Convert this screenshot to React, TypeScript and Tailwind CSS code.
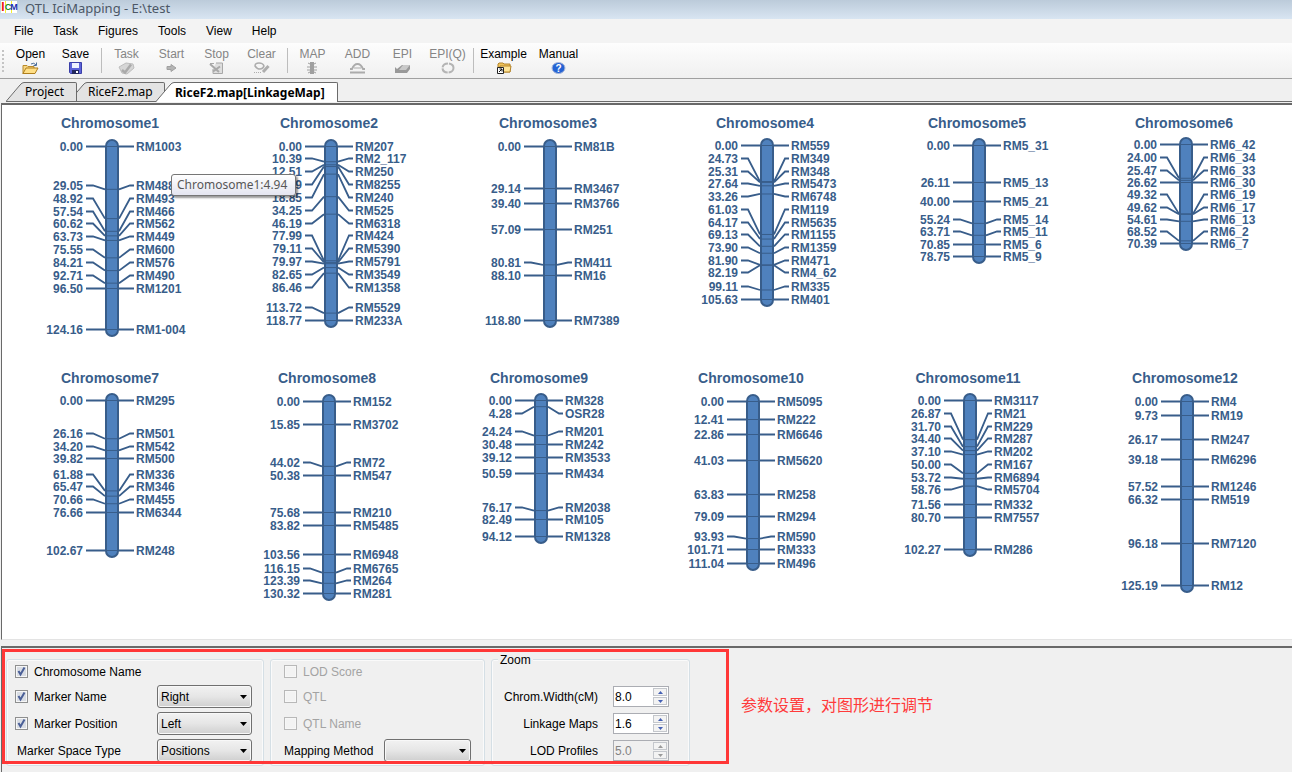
import { useState } from "react";
import type { ReactNode } from "react";
import clsx from "clsx";

// [position in cM, marker name, y of the label in the drawing]
type Marker = [string, string, number];

type Chromosome = {
  name: string;
  width: number;
  markers: Marker[];
};

const topRow: Chromosome[] = [
  {
    name: "Chromosome1",
    width: 219,
    markers: [
      ["0.00", "RM1003", 41],
      ["29.05", "RM488", 80],
      ["48.92", "RM493", 93],
      ["57.54", "RM466", 106],
      ["60.62", "RM562", 118],
      ["63.73", "RM449", 131],
      ["75.55", "RM600", 144],
      ["84.21", "RM576", 157],
      ["92.71", "RM490", 170],
      ["96.50", "RM1201", 183],
      ["124.16", "RM1-004", 224],
    ],
  },
  {
    name: "Chromosome2",
    width: 219,
    markers: [
      ["0.00", "RM207", 41],
      ["10.39", "RM2_117", 53],
      ["12.51", "RM250", 66],
      ["13.69", "RM8255", 79],
      ["18.85", "RM240", 92],
      ["34.25", "RM525", 105],
      ["46.19", "RM6318", 118],
      ["77.99", "RM424", 130],
      ["79.11", "RM5390", 143],
      ["79.97", "RM5791", 156],
      ["82.65", "RM3549", 169],
      ["86.46", "RM1358", 182],
      ["113.72", "RM5529", 202],
      ["118.77", "RM233A", 215],
    ],
  },
  {
    name: "Chromosome3",
    width: 217,
    markers: [
      ["0.00", "RM81B", 41],
      ["29.14", "RM3467", 83],
      ["39.40", "RM3766", 98],
      ["57.09", "RM251", 124],
      ["80.81", "RM411", 157],
      ["88.10", "RM16", 170],
      ["118.80", "RM7389", 215],
    ],
  },
  {
    name: "Chromosome4",
    width: 212,
    markers: [
      ["0.00", "RM559", 40],
      ["24.73", "RM349", 53],
      ["25.31", "RM348", 66],
      ["27.64", "RM5473", 78],
      ["33.26", "RM6748", 91],
      ["61.03", "RM119", 104],
      ["64.17", "RM5635", 117],
      ["69.13", "RM1155", 129],
      ["73.90", "RM1359", 142],
      ["81.90", "RM471", 155],
      ["82.19", "RM4_62", 167],
      ["99.11", "RM335", 181],
      ["105.63", "RM401", 194],
    ],
  },
  {
    name: "Chromosome5",
    width: 207,
    markers: [
      ["0.00", "RM5_31", 40],
      ["26.11", "RM5_13", 77],
      ["40.00", "RM5_21", 96],
      ["55.24", "RM5_14", 114],
      ["63.71", "RM5_11", 126],
      ["70.85", "RM5_6", 139],
      ["78.75", "RM5_9", 151],
    ],
  },
  {
    name: "Chromosome6",
    width: 200,
    markers: [
      ["0.00", "RM6_42", 39],
      ["24.00", "RM6_34", 52],
      ["25.47", "RM6_33", 65],
      ["26.62", "RM6_30", 77],
      ["49.32", "RM6_19", 89],
      ["49.62", "RM6_17", 102],
      ["54.61", "RM6_13", 114],
      ["68.52", "RM6_2", 126],
      ["70.39", "RM6_7", 138],
    ],
  },
];

const bottomRow: Chromosome[] = [
  {
    name: "Chromosome7",
    width: 217,
    markers: [
      ["0.00", "RM295", 40],
      ["26.16", "RM501", 73],
      ["34.20", "RM542", 86],
      ["39.82", "RM500", 98],
      ["61.88", "RM336", 114],
      ["65.47", "RM346", 126],
      ["70.66", "RM455", 139],
      ["76.66", "RM6344", 152],
      ["102.67", "RM248", 190],
    ],
  },
  {
    name: "Chromosome8",
    width: 212,
    markers: [
      ["0.00", "RM152", 41],
      ["15.85", "RM3702", 64],
      ["44.02", "RM72", 102],
      ["50.38", "RM547", 115],
      ["75.68", "RM210", 152],
      ["83.82", "RM5485", 165],
      ["103.56", "RM6948", 194],
      ["116.15", "RM6765", 208],
      ["123.39", "RM264", 220],
      ["130.32", "RM281", 233],
    ],
  },
  {
    name: "Chromosome9",
    width: 212,
    markers: [
      ["0.00", "RM328", 40],
      ["4.28", "OSR28", 53],
      ["24.24", "RM201", 71],
      ["30.48", "RM242", 84],
      ["39.12", "RM3533", 97],
      ["50.59", "RM434", 113],
      ["76.17", "RM2038", 147],
      ["82.49", "RM105", 159],
      ["94.12", "RM1328", 176],
    ],
  },
  {
    name: "Chromosome10",
    width: 217,
    markers: [
      ["0.00", "RM5095", 41],
      ["12.41", "RM222", 59],
      ["22.86", "RM6646", 74],
      ["41.03", "RM5620", 100],
      ["63.83", "RM258", 134],
      ["79.09", "RM294", 156],
      ["93.93", "RM590", 176],
      ["101.71", "RM333", 189],
      ["111.04", "RM496", 203],
    ],
  },
  {
    name: "Chromosome11",
    width: 217,
    markers: [
      ["0.00", "RM3117", 40],
      ["26.87", "RM21", 53],
      ["31.70", "RM229", 66],
      ["34.40", "RM287", 78],
      ["37.10", "RM202", 91],
      ["50.00", "RM167", 104],
      ["53.72", "RM6894", 117],
      ["58.76", "RM5704", 129],
      ["71.56", "RM332", 144],
      ["80.70", "RM7557", 157],
      ["102.27", "RM286", 189],
    ],
  },
  {
    name: "Chromosome12",
    width: 200,
    markers: [
      ["0.00", "RM4", 41],
      ["9.73", "RM19", 55],
      ["26.17", "RM247", 79],
      ["39.18", "RM6296", 99],
      ["57.52", "RM1246", 126],
      ["66.32", "RM519", 139],
      ["96.18", "RM7120", 183],
      ["125.19", "RM12", 225],
    ],
  },
];

// x of the chromosome's centre line inside its own drawing
const CENTER = 74;

const LinkageGroup = ({ name, width, markers }: Chromosome) => {
  const first = markers[0];
  const last = markers[markers.length - 1];
  const top = first[2];
  const scale = (last[2] - top) / Number(last[0]);

  return (
    <svg
      width={width}
      height={255}
      className="shrink-0 overflow-visible font-bold"
      fill="#385d8a"
      role="img"
      aria-label={name}
    >
      <text x={CENTER - 2} y={23} fontSize={14} textAnchor="middle">
        {name}
      </text>
      <rect
        x={CENTER - 6}
        y={top - 6}
        width={12}
        height={last[2] - top + 13}
        rx={6}
        fill="#4f81bd"
        stroke="#385d8a"
        strokeWidth={2}
      />
      {markers.map(([position, marker, y]) => {
        const labelY = y + 0.5;
        const exactY = top + Number(position) * scale + 0.5;
        // labels that sit level with their mark get a straight line
        const markY = Math.abs(exactY - labelY) < 1 ? labelY : exactY;
        return (
          <g key={marker}>
            <path
              d={`M${CENTER - 6} ${markY}h12`}
              stroke="#385d8a"
              strokeWidth={1}
            />
            <path
              d={`M${CENTER - 26} ${labelY}h7L${CENTER - 7} ${markY}M${CENTER + 7} ${markY}L${CENTER + 18} ${labelY}h4`}
              fill="none"
              stroke="#385d8a"
              strokeWidth={1.8}
            />
            <text x={CENTER - 29} y={y + 5} fontSize={12} textAnchor="end">
              {position}
            </text>
            <text x={CENTER + 24} y={y + 5} fontSize={12}>
              {marker}
            </text>
          </g>
        );
      })}
    </svg>
  );
};

const iconProps = { width: 17, height: 14, viewBox: "0 0 17 14" };

const OpenIcon = () => (
  <svg {...iconProps}>
    <path d="M1 12V3.500h4l1 1h6v2" fill="#f7d683" stroke="#b98a2a" />
    <path d="M1 11.500L4 6h12l-3 5.500z" fill="#ffdf86" stroke="#b07f1d" />
    <path d="M9 2q3-2 5 1M14.500 .5v3h-3" fill="none" stroke="#4b6d99" />
  </svg>
);

const SaveIcon = () => (
  <svg {...iconProps}>
    <path d="M2.500 .5h12v11h-11l-1-1z" fill="#5c63d8" stroke="#3a3fa8" />
    <path d="M5 1h7v5H5z" fill="#eef2ff" />
    <path d="M5 8h7v4H5z" fill="#23285e" />
    <path d="M9 9h2v2H9z" fill="#fff" />
  </svg>
);

const TaskIcon = () => (
  <svg {...iconProps} fill="none" stroke="#bdbdbd">
    <path d="M1 5l7-4 7 1 1 4-7 6-5-1z" fill="#d6d6d6" />
    <path d="M4 8l3 2.500 6-8" stroke="#aaa" strokeWidth={2.500} />
  </svg>
);

const StartIcon = () => (
  <svg {...iconProps}>
    <path d="M4 4.500h4v-2L13 6 8 9.500v-2H4z" fill="#b4b4b4" stroke="#a0a0a0" />
  </svg>
);

const StopIcon = () => (
  <svg {...iconProps} fill="none" stroke="#a8a8a8">
    <path d="M2 1.500h4M8 1h6.500v10.500H5V7" fill="#dedede" />
    <path d="M2 2l9 8M5 9.500l7-5" strokeWidth={2} />
  </svg>
);

const ClearIcon = () => (
  <svg {...iconProps} fill="none" stroke="#adadad">
    <path d="M2 4q0-3 4-3t5 3q-1 3-4 3T2 4z" strokeWidth={1.500} />
    <path d="M15.500 4L10 10" strokeWidth={3} />
    <path d="M1 10.500h8" strokeDasharray="1 1" />
  </svg>
);

const MapIcon = () => (
  <svg {...iconProps} stroke="#a0a0a0">
    <path d="M4 1l4 2 4-2M3 5h10M3 8h10M4 11l4-2 4 2" fill="none" />
    <path d="M8 0v12" strokeWidth={4} />
  </svg>
);

const AddIcon = () => (
  <svg {...iconProps} fill="none" stroke="#ababab">
    <path d="M1 7h2q2-5 5.500-5T14 7h2" strokeWidth={2} />
    <path d="M5 6h7" />
    <path d="M1 10.500h15" strokeWidth={2} />
  </svg>
);

const EpiIcon = () => (
  <svg {...iconProps}>
    <path d="M1 11V5l2 2 5-4h8v4l-3 4z" fill="#999" />
    <path d="M5 8l4-5h7l-4 5z" fill="#c9c9c9" />
  </svg>
);

const EpiQIcon = () => (
  <svg {...iconProps}>
    <ellipse
      cx={9}
      cy={6}
      rx={5.500}
      ry={4.500}
      fill="none"
      stroke="#b4b4b4"
      strokeWidth={2}
      strokeDasharray="7 1"
    />
  </svg>
);

const ExampleIcon = () => (
  <svg {...iconProps}>
    <path d="M3 9V2l1-1h4l1 1h6v8H3z" fill="#f0c45a" stroke="#b3832a" />
    <path d="M5 4h11l-1 6H5z" fill="#ffe596" stroke="#b3832a" />
    <path d="M2.500 5.500h6v6h-6z" fill="#fff" stroke="#222" />
    <path d="M4 10l3-3M4.500 7H7v2.500" fill="none" stroke="#111" />
  </svg>
);

const ManualIcon = () => (
  <svg {...iconProps}>
    <ellipse
      cx={8.500}
      cy={6}
      rx={6.500}
      ry={5.500}
      fill="#2563d4"
      stroke="#a9b8d8"
    />
    <text
      x={8.500}
      y={10}
      fontSize={10}
      fontWeight="bold"
      fill="#fff"
      textAnchor="middle"
    >
      ?
    </text>
  </svg>
);

type ToolButtonProps = {
  label: string;
  icon: ReactNode;
  disabled?: boolean;
  wide?: boolean;
};

const ToolButton = ({ label, icon, disabled, wide }: ToolButtonProps) => (
  <button
    type="button"
    disabled={disabled}
    className={clsx(
      "flex shrink-0 flex-col items-center leading-4 text-black disabled:text-[#858585]",
      wide ? "w-[55px]" : "w-[45px]",
    )}
  >
    {label}
    {icon}
  </button>
);

const Separator = () => (
  <span className="mr-0.5 ml-[3px] h-[25px] w-px shrink-0 bg-[#bdbdbd]" />
);

type TabProps = {
  label: string;
  className: string;
  active?: boolean;
};

const Tab = ({ label, className, active }: TabProps) => (
  <button
    type="button"
    role="tab"
    aria-selected={!!active}
    className={clsx(
      "flex h-5 shrink-0 font-[Noto_Sans,sans-serif] text-[12px] whitespace-nowrap",
      className,
    )}
  >
    <svg width={18} height={20} className="shrink-0">
      <path
        d="M0 20L14 3Q16 .5 18 .5V20z"
        fill={active ? "#ffffff" : "#e3e3e3"}
      />
      <path
        d={
          active
            ? "M0 19.500L14 3Q16 .5 18 .5"
            : "M18 19.500H0L14 3Q16 .5 18 .5"
        }
        fill="none"
        stroke="#6b6b6b"
      />
    </svg>
    <span
      className={clsx(
        "flex h-full flex-1 items-center rounded-tr-xs border-t border-r border-[#6b6b6b] pl-px",
        active ? "bg-white font-bold" : "border-b bg-[#e3e3e3]",
      )}
    >
      {label}
    </span>
  </button>
);

type CheckboxProps = {
  label: string;
  checked?: boolean;
  disabled?: boolean;
};

const Checkbox = ({ label, checked, disabled }: CheckboxProps) => (
  <label
    className={clsx(
      "flex items-center gap-1.5",
      disabled && "text-[#a3a3a3]",
    )}
  >
    <span className="relative flex">
      <input
        type="checkbox"
        defaultChecked={checked}
        disabled={disabled}
        className="peer size-[13px] appearance-none border border-[#8e8f8f] bg-[#d9dde4] shadow-[inset_0_0_0_1px_#f7f7f7] disabled:border-[#b8b8b8] disabled:bg-[#f3f3f3]"
      />
      <svg
        viewBox="0 0 13 13"
        className="pointer-events-none absolute inset-0 hidden size-[13px] peer-checked:block"
      >
        <path
          d="M3.500 6L5.500 9.500L9.500 2.500"
          fill="none"
          stroke="#4a5f97"
          strokeWidth={2}
        />
      </svg>
    </span>
    {label}
  </label>
);

type SelectProps = {
  id: string;
  label: string;
  options: string[];
  className: string;
};

const Select = ({ id, label, options, className }: SelectProps) => (
  <span className={clsx("relative flex", className)}>
    <select
      id={id}
      aria-label={label}
      className="h-[23px] w-full appearance-none rounded-[3px] border border-[#707070] bg-linear-to-b from-[#f2f2f2] via-[#e6e6e6] to-[#cfcfcf] pl-[3px] shadow-[inset_0_0_0_1px_#f8f8f8]"
    >
      {options.map((option) => (
        <option key={option}>{option}</option>
      ))}
    </select>
    <svg
      width={7}
      height={4}
      className="pointer-events-none absolute top-2.5 right-[5px]"
    >
      <path d="M0 0h7L3.500 4z" />
    </svg>
  </span>
);

type SpinnerProps = {
  id: string;
  label: string;
  initial: number;
  disabled?: boolean;
};

const Spinner = ({ id, label, initial, disabled }: SpinnerProps) => {
  const [value, setValue] = useState(initial);
  const arrow = disabled ? "#9a9a9a" : "#4460b4";

  return (
    <div className="flex h-[27px] items-center justify-end">
      <label htmlFor={id} className="pr-[15px]">
        {label}
      </label>
      <div
        className={clsx(
          "flex h-[21px] w-14 border border-[#abadb3]",
          disabled ? "bg-[#f0f0f0] text-[#838383]" : "bg-white",
        )}
      >
        <input
          id={id}
          value={value.toFixed(1)}
          disabled={disabled}
          readOnly
          className="w-[39px] pl-px"
        />
        <span className="flex flex-col gap-px py-px">
          <button
            type="button"
            aria-label={`Increase ${label}`}
            disabled={disabled}
            onClick={() => setValue(value + 0.1)}
            className="flex h-2 w-[14px] items-center justify-center border border-[#c4c7cc] bg-[#f3f3f3]"
          >
            <svg width={5} height={3}>
              <path d="M0 3h5L2.500 0z" fill={arrow} />
            </svg>
          </button>
          <button
            type="button"
            aria-label={`Decrease ${label}`}
            disabled={disabled}
            onClick={() => setValue(value - 0.1)}
            className="flex h-2 w-[14px] items-center justify-center border border-[#c4c7cc] bg-[#f3f3f3]"
          >
            <svg width={5} height={3}>
              <path d="M0 0h5L2.500 3z" fill={arrow} />
            </svg>
          </button>
        </span>
      </div>
    </div>
  );
};

const App = () => {
  const menus = ["File", "Task", "Figures", "Tools", "View", "Help"];
  const groupBox =
    "h-[107px] shrink-0 rounded-[3px] border border-[#d5dfe5] shadow-[inset_0_0_0_1px_#fafafa]";

  return (
    <div className="flex min-h-screen flex-col overflow-hidden bg-[#f0f0f0] font-[Liberation_Sans,Arial,sans-serif] text-[12px] text-black">
      <header className="flex h-[19px] items-start gap-[7px] bg-linear-to-b from-[#bccbda] to-[#d8e5f2] font-[Noto_Sans,sans-serif] text-[13px] text-[#4c5766]">
        <svg width={17} height={12} className="mt-px ml-px" aria-hidden="true">
          <path d="M0 0h16v12H0z" fill="#fff" />
          <path d="M4 0h1v12H4zM10 0h1v12h-1z" fill="#f4ee33" />
          <g
            fontFamily="Liberation Sans"
            fontWeight="bold"
            fontSize={10}
            textAnchor="middle"
          >
            <text x={2} y={10} fontSize={12} fill="#e11">
              I
            </text>
            <text x={7} y={9} fontSize={9} fill="#128a22">
              C
            </text>
            <text x={13} y={9} fontSize={9} fill="#1a2fb0">
              M
            </text>
          </g>
        </svg>
        <h1 className="leading-4">QTL IciMapping - E:\test</h1>
      </header>

      <nav className="flex h-6 items-center bg-[#f3f3f3] pl-1">
        {menus.map((menu) => (
          <button key={menu} type="button" className="px-2.5 leading-4">
            {menu}
          </button>
        ))}
      </nav>

      <div
        role="toolbar"
        className="flex h-9 items-center border-b border-[#a0a0a0] bg-linear-to-b from-[#fdfdfd] to-[#f0f0f0]"
      >
        <span className="mr-1 ml-0.5 h-[22px] border-l-2 border-dotted border-[#c4c4c4]" />
        <ToolButton label="Open" icon={<OpenIcon />} />
        <ToolButton label="Save" icon={<SaveIcon />} />
        <Separator />
        <ToolButton label="Task" icon={<TaskIcon />} disabled />
        <ToolButton label="Start" icon={<StartIcon />} disabled />
        <ToolButton label="Stop" icon={<StopIcon />} disabled />
        <ToolButton label="Clear" icon={<ClearIcon />} disabled />
        <Separator />
        <ToolButton label="MAP" icon={<MapIcon />} disabled />
        <ToolButton label="ADD" icon={<AddIcon />} disabled />
        <ToolButton label="EPI" icon={<EpiIcon />} disabled />
        <ToolButton label="EPI(Q)" icon={<EpiQIcon />} disabled />
        <Separator />
        <ToolButton label="Example" icon={<ExampleIcon />} wide />
        <ToolButton label="Manual" icon={<ManualIcon />} wide />
      </div>

      <div role="tablist" className="flex h-[23px] items-end pl-1.5">
        <Tab label="Project" className="z-10 w-[71px]" />
        <Tab label="RiceF2.map" className="-ml-2 w-24" />
        <Tab
          label="RiceF2.map[LinkageMap]"
          className="z-20 -ml-[9px] w-[182px]"
          active
        />
        <span className="flex-1 border-b border-[#6b6b6b]" />
      </div>

      <main className="relative mt-px ml-px flex-1 border-t-2 border-b border-l border-[#696969] border-b-[#e3e3e3] bg-white pb-6 pl-9">
        <div className="flex">
          {topRow.map((chromosome) => (
            <LinkageGroup key={chromosome.name} {...chromosome} />
          ))}
        </div>
        <div className="flex">
          {bottomRow.map((chromosome) => (
            <LinkageGroup key={chromosome.name} {...chromosome} />
          ))}
        </div>
        <div
          role="tooltip"
          className="absolute top-[69px] left-[169px] flex h-[22px] items-center rounded-[3px] border border-[#767676] bg-linear-to-b from-white to-[#e4e5f0] pr-2 pl-[5px] font-[Noto_Sans,sans-serif] whitespace-nowrap text-[#575757] shadow-[2px_2px_2px_#0006]"
        >
          Chromosome1:4.94
        </div>
      </main>

      <section className="mt-1.5 ml-px h-[126px] border-t-2 border-l border-[#696969]">
        <div className="relative flex h-full items-start pt-[11px] pl-1">
          <div className={clsx(groupBox, "w-[258px] pl-2")}>
            <div className="flex h-[23px] items-center">
              <Checkbox label="Chromosome Name" checked />
            </div>
            <div className="flex h-[27px] items-center justify-between pr-[11px]">
              <Checkbox label="Marker Name" checked />
              <Select
                id="name-side"
                label="Marker Name side"
                options={["Right", "Left"]}
                className="w-[95px]"
              />
            </div>
            <div className="flex h-[27px] items-center justify-between pr-[11px]">
              <Checkbox label="Marker Position" checked />
              <Select
                id="position-side"
                label="Marker Position side"
                options={["Left", "Right"]}
                className="w-[95px]"
              />
            </div>
            <div className="flex h-[27px] items-center justify-between pr-[11px] pl-0.5">
              <label htmlFor="space-type">Marker Space Type</label>
              <Select
                id="space-type"
                label="Marker Space Type"
                options={["Positions", "Intervals"]}
                className="w-[95px]"
              />
            </div>
          </div>

          <div className={clsx(groupBox, "ml-1.5 w-[215px] pl-[13px]")}>
            <div className="flex h-[23px] items-center">
              <Checkbox label="LOD Score" disabled />
            </div>
            <div className="flex h-[27px] items-center">
              <Checkbox label="QTL" disabled />
            </div>
            <div className="flex h-[27px] items-center">
              <Checkbox label="QTL Name" disabled />
            </div>
            <div className="flex h-[27px] items-center justify-between pr-[13px]">
              <label htmlFor="mapping-method">Mapping Method</label>
              <Select
                id="mapping-method"
                label="Mapping Method"
                options={[""]}
                className="w-[87px]"
              />
            </div>
          </div>

          <div
            role="group"
            aria-labelledby="zoom-title"
            className={clsx(groupBox, "ml-1.5 w-[199px] pr-5")}
          >
            <h2
              id="zoom-title"
              className="-mt-2 mb-[15px] ml-1.5 w-fit bg-[#f0f0f0] px-0.5 leading-4"
            >
              Zoom
            </h2>
            <Spinner id="width" label="Chrom.Width(cM)" initial={8} />
            <Spinner id="maps" label="Linkage Maps" initial={1.6} />
            <Spinner id="profiles" label="LOD Profiles" initial={5} disabled />
          </div>

          <p className="mt-[33px] ml-[51px] font-[Noto_Sans_CJK_SC,sans-serif] text-[16px] leading-6 whitespace-nowrap text-[#ff3b3b]">
            参数设置，对图形进行调节
          </p>

          <div className="pointer-events-none absolute top-px left-0 h-[115px] w-[727px] border-3 border-[#ff3737]" />
        </div>
      </section>
    </div>
  );
};

export default App;
